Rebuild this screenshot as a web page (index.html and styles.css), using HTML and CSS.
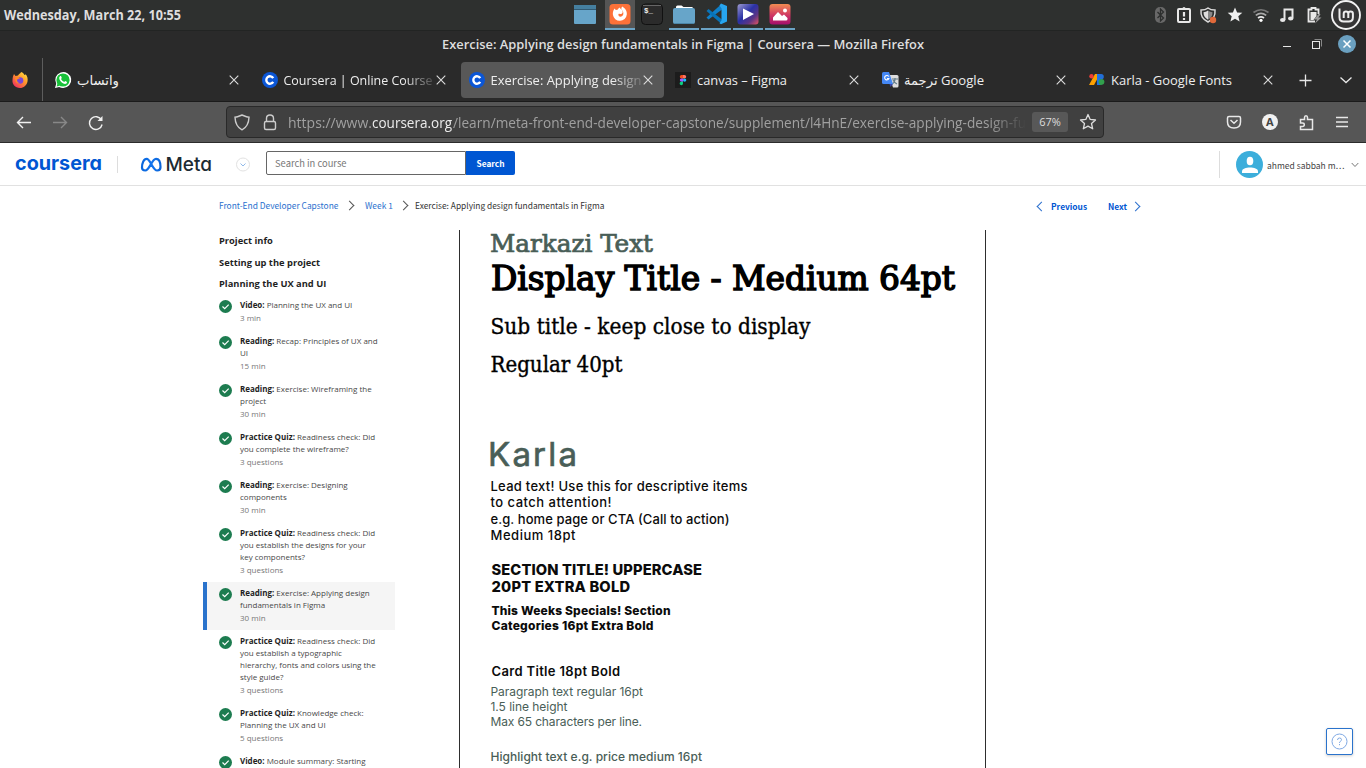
FILE: index.html
```html
<!DOCTYPE html>
<html lang="en">
<head>
<meta charset="utf-8">
<title>Exercise: Applying design fundamentals in Figma | Coursera</title>
<link rel="stylesheet" href="styles.css">
</head>
<body>
<div class="panel">
  <div class="clock"><svg width="190" height="30"><text x="4" y="20.3" textLength="177" lengthAdjust="spacingAndGlyphs">Wednesday, March 22, 10:55</text></svg></div>
  <div class="dock">
    <div class="app desk"><svg width="30" height="30"><rect x="4" y="5" width="22" height="19" rx="1" fill="#67a5c9"/><path d="M4 9V6q0-1 1-1h20q1 0 1 1v3z" fill="#457f9f"/><path d="M4 9.500h22" stroke="#315a73"/></svg></div>
    <div class="app on current"><svg width="30" height="30"><rect x="4.500" y="4" width="21" height="20.500" rx="3.500" fill="#fd7139"/><path d="M9.500 8.500l1.300 1.500 1.700-.3C13.500 8 14.300 8 14.500 7.500c1 1.500 2.500 2 3 3.500q.6 2-.8 2.800-1.500.7-2.700-.3-1.500 1.300 0 2.700c1.500 1 3.800.2 4.300-2 .3-2.200-.5-3.500-2-5.200 0-1 .2-1.800.9-2.500 2.800 1.500 5 4.500 4.600 8a7 7 0 01-13.900.3c-.3-2.500.3-4.500 1.600-6.300z" fill="#fff"/></svg></div>
    <div class="app"><svg width="30" height="30"><rect x="4.500" y="4" width="21" height="20.500" rx="4" fill="#2b2b2b" stroke="#111"/><path d="M6 5.500h18" stroke="#666"/><text x="7" y="12.500" class="term">$_</text></svg></div>
    <div class="app on"><svg width="30" height="30"><path d="M7 7q0-1.500 1.500-1.500h4L14.500 7H23q1 0 1 1.500V12H7z" fill="#fff"/><rect x="4" y="8" width="22" height="16" rx="2" fill="#67a5c9"/><path d="M5 23.500h20" stroke="#4c86a8"/></svg></div>
    <div class="app on"><svg width="30" height="30"><path d="M20.500 4L5.500 17.500l2 2L21 9.500z" fill="#0f7fc8"/><path d="M5.500 11l2-2L21 19.500l-.5 4.500z" fill="#0873b8"/><path d="M20 3.500l6 2.500v15.500l-6 2.800-1.500-1 2-3V8.500l-2-3z" fill="#27a5ef"/></svg></div>
    <div class="app on"><svg width="30" height="30"><defs><linearGradient id="vid" x1="0" y1="0" x2="1" y2="1"><stop offset="0" stop-color="#9d9bd0"/><stop offset=".45" stop-color="#2931a5"/><stop offset=".72" stop-color="#5b3485"/><stop offset="1" stop-color="#e35361"/></linearGradient></defs><rect x="4.500" y="4" width="21" height="20.500" rx="3" fill="url(#vid)"/><path d="M10 8.500l11 5.500-11 6z" fill="#fff"/></svg></div>
    <div class="app on"><svg width="30" height="30"><defs><linearGradient id="pic" x1="0" y1="0" x2="0" y2="1"><stop offset="0" stop-color="#f18b52"/><stop offset=".55" stop-color="#cf3764"/><stop offset="1" stop-color="#a50e6c"/></linearGradient></defs><rect x="4.500" y="4" width="21" height="20.500" rx="3" fill="url(#pic)"/><path d="M8 20.500v-3l5-5.500 4 4 2-1.500 3.500 3.500v1q0 1.500-1.500 1.500z" fill="#fff"/><circle cx="20" cy="10.500" r="2" fill="#fff"/></svg></div>
  </div>
  <svg class="tray" width="226" height="31" viewBox="1140 0 226 31">
    <rect x="1155" y="7" width="11" height="16" rx="5" fill="#686868"/><path d="M1157.500 12l6 6-3 3V9l3 3-6 6" fill="none" stroke="#2c2e2d" stroke-width="1.300"/>
    <rect x="1178" y="9" width="12" height="13" rx="1" fill="none" stroke="#e8e8e8" stroke-width="2"/><circle cx="1184" cy="8.500" r="1.600" fill="#e8e8e8"/><path d="M1184 12v4.500m0 1.500v2" stroke="#e8e8e8" stroke-width="2.200"/>
    <path d="M1208 8c-2.500 2-4.500 2-7 2-.5 6 1.500 9 7 12 5.500-3 7.500-6 7-12-2.500 0-4.500 0-7-2z" fill="none" stroke="#d9d9d9" stroke-width="1.500"/><path d="M1208 10.500c-1.700 1.300-3 1.500-4.500 1.700 0 3.500 1.500 5.700 4.500 7.500z" fill="#ddd"/><path d="M1208 10.500c1.700 1.300 3 1.500 4.500 1.700 0 3.500-1.500 5.700-4.500 7.500z" fill="#888"/><circle cx="1213" cy="20" r="3.200" fill="#e0693a"/>
    <path d="M1235 7.500l2.100 4.900 5.200.4-4 3.500 1.300 5.200-4.600-2.800-4.600 2.800 1.300-5.200-4-3.500 5.200-.4z" fill="#efefef"/>
    <g fill="none" stroke-width="1.700"><path d="M1253.500 12.500q7.500-5.500 15 0" stroke="#777"/><path d="M1255.800 15.300q5.200-4 10.400 0" stroke="#aaa"/><path d="M1258 18q3-2.300 6 0" stroke="#e8e8e8"/></g><circle cx="1261" cy="20.300" r="1.600" fill="#fff"/>
    <path d="M1284.500 20V9.500h8V18" fill="none" stroke="#e8e8e8" stroke-width="2"/><ellipse cx="1282.700" cy="20" rx="2.700" ry="2" fill="#e8e8e8"/><ellipse cx="1290.700" cy="18.500" rx="2.700" ry="2" fill="#e8e8e8"/>
    <path d="M1315 21.500h-6.500V9.500h3V8h4v1.500h3V14" fill="none" stroke="#e8e8e8" stroke-width="1.800"/><path d="M1310.500 12h6v4l-3 4h-3z" fill="#e8e8e8"/><path d="M1319 13.500l-5 6h3l-2 4 6.500-6h-3.200l2.200-3z" fill="#999"/>
    <circle cx="1346" cy="15" r="14" fill="#363636" stroke="#f2f2f2" stroke-width="1.900"/><path d="M1339.500 8.500v8.800q0 4.200 4.200 4.200h5q4.200 0 4.200-4.200v-3.500q0-2.300-2.300-2.300t-2.300 2.300V18m0-4.200q0-2.300-2.300-2.300t-2.300 2.300V18" fill="none" stroke="#eee" stroke-width="2"/>
  </svg>
</div>

<div class="titlebar">
  <svg class="wtitle" width="490" height="27"><text x="4" y="18" textLength="482" lengthAdjust="spacingAndGlyphs">Exercise: Applying design fundamentals in Figma | Coursera — Mozilla Firefox</text></svg>
  <svg class="wctl" width="88" height="27" viewBox="1278 31 88 27"><path d="M1283 46.500h8" stroke="#e6e6e6"/><path d="M1314.500 39.500h7v7" fill="none" stroke="#888"/><rect x="1312.500" y="41.500" width="7" height="7" fill="none" stroke="#e6e6e6"/><circle cx="1347" cy="44" r="9" fill="#6ba0c0"/><path d="M1343.500 40.500l7 7m0-7l-7 7" stroke="#fff" stroke-width="1.500"/></svg>
</div>

<div class="tabs">
  <div class="pinned"><svg width="18" height="18" viewBox="0 0 18 18"><defs><linearGradient id="ff" x1="1" y1="0" x2=".2" y2="1"><stop offset="0" stop-color="#fff14b"/><stop offset=".45" stop-color="#ff9a2a"/><stop offset="1" stop-color="#f02d62"/></linearGradient></defs><path d="M3 3l1.500 2L7 4.500C8.500 2 9.500 3 10 1c2 .5 3 2 3.500 3 1.500-.3 1-1 1-1 2 2 2.500 5 2 7.500-.8 4-4 6.500-7.500 6.500-5 0-8-4-7.500-8C1.700 6.500 2 5 3 3z" fill="url(#ff)"/><circle cx="9" cy="9.500" r="3.300" fill="#7846d7"/><path d="M4 7q3-2 5 .5-3 0-3 2t3 3q-5 .5-5-5.500" fill="#ff8a25"/></svg></div>
  <div class="tab"><svg class="ico" width="16" height="16" viewBox="0 0 16 16"><path d="M0 16l1.200-4.200A8 8 0 118 16q-2 0-3.900-1z" fill="#fff"/><circle cx="8" cy="8" r="6.600" fill="#18c139"/><path d="M1.600 14.500l1-3.500 2.300 2.700z" fill="#18c139"/><path d="M5.200 4q-1.500 1-.8 3.200c1 2.500 3.500 4.500 5.600 4.700q2 0 2.100-2L10.200 9l-1 1.100Q7 9.300 6 7.100L6.800 6 6 4z" fill="#fff"/></svg><svg class="lab" width="155" height="26"><text x="1" y="18" textLength="42" lengthAdjust="spacingAndGlyphs">واتساب</text></svg><svg class="x"><path d="M.7 .7l8.600 8.600m0-8.600L.7 9.300"/></svg></div>
  <div class="tab fade"><svg class="ico" width="16" height="16"><circle cx="8" cy="8" r="8" fill="#0b56d6"/><path d="M11.200 6.100A3.700 3.700 0 1011.200 9.900" fill="none" stroke="#fff" stroke-width="2.400"/></svg><svg class="lab" width="151" height="26"><text x="0.500" y="18" textLength="149" lengthAdjust="spacingAndGlyphs">Coursera | Online Course</text></svg><svg class="x"><path d="M.7 .7l8.600 8.600m0-8.600L.7 9.300"/></svg></div>
  <div class="tab fade active"><svg class="ico" width="16" height="16"><circle cx="8" cy="8" r="8" fill="#0b56d6"/><path d="M11.200 6.100A3.700 3.700 0 1011.200 9.900" fill="none" stroke="#fff" stroke-width="2.400"/></svg><svg class="lab" width="153" height="26"><text x="0.500" y="18" textLength="151" lengthAdjust="spacingAndGlyphs">Exercise: Applying design</text></svg><svg class="x"><path d="M.7 .7l8.600 8.600m0-8.600L.7 9.300"/></svg></div>
  <div class="tab"><svg class="ico" width="16" height="16"><path d="M0 0h16v16H0z" fill="#1c1c1c"/><path d="M8 3H6.500a1.700 1.700 0 000 3.400H8z" fill="#f24e1e"/><path d="M8 3h1.500a1.700 1.700 0 010 3.400H8z" fill="#ff7262"/><path d="M8 6.400H6.500a1.700 1.700 0 000 3.400H8z" fill="#a259ff"/><circle cx="9.600" cy="8.100" r="1.700" fill="#1abcfe"/><path d="M8 9.800H6.500A1.700 1.700 0 108 11.500z" fill="#0acf83"/></svg><svg class="lab" width="155" height="26"><text x="1" y="18" textLength="90" lengthAdjust="spacingAndGlyphs">canvas – Figma</text></svg><svg class="x"><path d="M.7 .7l8.600 8.600m0-8.600L.7 9.300"/></svg></div>
  <div class="tab"><svg class="ico" width="17" height="16"><path d="M7 3h8q1.500 0 1.500 1.500V14q0 1.500-1.500 1.500h-4z" fill="#ddd"/><path d="M10 7h6m-3-1v1c0 3-1 4-3 5m1-4c1 2 2 3 4 4" fill="none" stroke="#667d88" stroke-width="1.200"/><path d="M1.500 0H7l4 12H1.500Q0 12 0 10.500v-9Q0 0 1.500 0z" fill="#4487f4"/><path d="M7.500 12H11l-2.500 3z" fill="#3b45a8"/><path d="M6.800 4.600A2.200 2.200 0 106.900 6.500H5" fill="none" stroke="#fff" stroke-width="1.100"/></svg><svg class="lab" width="155" height="26"><text x="0" y="18" textLength="80" lengthAdjust="spacingAndGlyphs">ترجمة Google</text></svg><svg class="x"><path d="M.7 .7l8.600 8.600m0-8.600L.7 9.300"/></svg></div>
  <div class="tab"><svg class="ico" width="17" height="16"><path d="M6 2h5L5 13H0z" fill="#fba001"/><circle cx="2.500" cy="4.300" r="2.200" fill="#ee3d36"/><path d="M8 2h3v11H8z" fill="#1a73e8"/><path d="M11 2a2.800 2.800 0 010 5.500z" fill="#3185f0"/><path d="M11 7.200a2.900 2.900 0 010 5.800z" fill="#21a35a"/><circle cx="12.500" cy="9.800" r="2.900" fill="#32a04d"/><circle cx="12.200" cy="4.700" r="2.600" fill="#226fd8"/></svg><svg class="lab" width="155" height="26"><text x="0" y="18" textLength="121" lengthAdjust="spacingAndGlyphs">Karla - Google Fonts</text></svg><svg class="x"><path d="M.7 .7l8.600 8.600m0-8.600L.7 9.300"/></svg></div>
  <svg class="tabend" width="80" height="43" viewBox="1284 58 80 43" fill="none" stroke="#e8e8e8" stroke-width="1.300"><path d="M1299.500 80.500h12m-6-6v12M1340.500 77.500l5.500 5 5.500-5"/></svg>
</div>

<div class="nav">
  <svg width="226" height="40" viewBox="0 102 226 40" fill="none" stroke="#f1f1f1" stroke-width="1.400"><path d="M31 122.500H18m5-5.500l-5.500 5.500 5.500 5.500"/><path d="M53 122.500h13m-5-5.500l5.500 5.500-5.500 5.500" stroke="#888"/><path d="M101.500 120a6.400 6.400 0 10.600 4.500"/><path d="M102.500 116v5h-5z" fill="#f1f1f1" stroke="none"/></svg>
  <div class="url">
    <svg width="60" height="30" viewBox="227 107 60 30" fill="none" stroke="#ccc" stroke-width="1.400"><path d="M242 115c-2.500 1-4.500 2-7 2.200.2 6 2 10 7 12.600 5-2.600 6.800-6.600 7-12.600-2.500-.2-4.500-1.200-7-2.200z"/><rect x="264.500" y="121.500" width="11" height="8" rx="1.500"/><path d="M266.500 121.500v-3q0-3.500 3.500-3.500t3.500 3.500v3"/></svg>
    <svg class="addr" width="738" height="30"><text y="21"><tspan x="0" textLength="84" lengthAdjust="spacingAndGlyphs">https://www.</tspan><tspan class="host" x="84" textLength="80" lengthAdjust="spacingAndGlyphs">coursera.org</tspan><tspan x="165" textLength="573" lengthAdjust="spacingAndGlyphs">/learn/meta-front-end-developer-capstone/supplement/l4HnE/exercise-applying-design-fu</tspan></text></svg>
    <span class="zoom">67%</span>
    <svg class="star" width="18" height="18" viewBox="0 0 18 18" fill="none" stroke="#ddd" stroke-width="1.300" stroke-linejoin="round"><path d="M9 1.500l2.200 4.900 5.300.6-4 3.500 1.200 5.300L9 13.100l-4.700 2.700 1.200-5.300-4-3.500 5.300-.6z"/></svg>
  </div>
  <svg width="262" height="40" viewBox="1104 102 262 40" fill="none" stroke="#e8e8e8" stroke-width="1.500"><path d="M1229 116.500h10q1.500 0 1.500 1.500v4q0 6-6.500 6t-6.500-6v-4q0-1.500 1.500-1.500zM1230.500 120l3.500 3.200 3.500-3.200"/><circle cx="1270" cy="122" r="8" fill="#f1f1f1" stroke="none"/><text x="1266" y="126" class="acct">A</text><path d="M1300.500 119.500h4v-2q0-1.800 1.500-1.800t1.500 1.800v2h5V129.500h-12v-3h2q1.800 0 1.800-1.700t-1.800-1.700h-2z"/><path d="M1336 117.500h12m-12 4.500h12m-12 4.500h12" stroke-width="1.300"/></svg>
</div>

<div class="head">
  <svg width="265" height="42" viewBox="0 143 265 42"><text class="cour" x="15" y="170" textLength="87" lengthAdjust="spacingAndGlyphs">coursera</text><path d="M117.500 156v17" stroke="#ddd"/><defs><linearGradient id="mt" x1="0" x2="1"><stop offset="0" stop-color="#0866dc"/><stop offset=".5" stop-color="#1475ee"/><stop offset="1" stop-color="#0b65d8"/></linearGradient></defs><path d="M142 167.500c0-4.500 1.800-8.700 4.700-8.700 3.700 0 5.900 11.700 10.500 11.700 2.300 0 3.300-1.500 3.300-3.500 0-4.500-1.500-8.200-4.500-8.200-4.300 0-6.400 11.700-10.700 11.700-2 0-3.300-1-3.300-3z" fill="none" stroke="url(#mt)" stroke-width="2.200"/><text class="meta" x="165.500" y="171" textLength="46.500" lengthAdjust="spacingAndGlyphs">Meta</text><circle cx="243" cy="164.500" r="6.500" fill="none" stroke="#e2e2e2"/><path d="M240.500 163.500l2.500 2.500 2.500-2.500" fill="none" stroke="#8fb9ea"/></svg>
  <div class="search"><span class="field">Search in course</span><span class="go">Search</span></div>
  <div class="user"><svg width="27" height="27"><circle cx="13.500" cy="13.500" r="13.500" fill="#3caedb"/><ellipse cx="14" cy="10" rx="3.300" ry="4.300" fill="#fff"/><path d="M6 22v-1.500c0-3 4-4 8-4s8 1 8 4V22z" fill="#fff"/></svg><span>ahmed sabbah m…</span><svg width="8" height="6"><path d="M.7 1L4 4.500 7.300 1" fill="none" stroke="#777"/></svg></div>
</div>

<div class="crumbs">
  <a class="c1">Front-End Developer Capstone</a><i class="chev"></i><a class="c2">Week 1</a><i class="chev"></i><span class="c3">Exercise: Applying design fundamentals in Figma</span>
  <div class="pager"><i class="chev back"></i><b>Previous</b><b class="nx">Next</b><i class="chev fwd"></i></div>
</div>

<div class="main">
  <div class="side">
    <h3>Project info</h3><h3>Setting up the project</h3><h3>Planning the UX and UI</h3>
    <div class="item"><svg class="ok" viewBox="0 0 13 13"><circle cx="6.500" cy="6.500" r="6.500"/><path d="M3.500 6.500l2.200 2.200 4-4"/></svg><p><b>Video:</b> Planning the UX and UI<small>3 min</small></p></div>
    <div class="item"><svg class="ok" viewBox="0 0 13 13"><circle cx="6.500" cy="6.500" r="6.500"/><path d="M3.500 6.500l2.200 2.200 4-4"/></svg><p><b>Reading:</b> Recap: Principles of UX and<br>UI<small>15 min</small></p></div>
    <div class="item"><svg class="ok" viewBox="0 0 13 13"><circle cx="6.500" cy="6.500" r="6.500"/><path d="M3.500 6.500l2.200 2.200 4-4"/></svg><p><b>Reading:</b> Exercise: Wireframing the<br>project<small>30 min</small></p></div>
    <div class="item"><svg class="ok" viewBox="0 0 13 13"><circle cx="6.500" cy="6.500" r="6.500"/><path d="M3.500 6.500l2.200 2.200 4-4"/></svg><p><b class="quiz">Practice Quiz:</b> Readiness check: Did<br>you complete the wireframe?<small>3 questions</small></p></div>
    <div class="item"><svg class="ok" viewBox="0 0 13 13"><circle cx="6.500" cy="6.500" r="6.500"/><path d="M3.500 6.500l2.200 2.200 4-4"/></svg><p><b>Reading:</b> Exercise: Designing<br>components<small>30 min</small></p></div>
    <div class="item"><svg class="ok" viewBox="0 0 13 13"><circle cx="6.500" cy="6.500" r="6.500"/><path d="M3.500 6.500l2.200 2.200 4-4"/></svg><p><b class="quiz">Practice Quiz:</b> Readiness check: Did<br>you establish the designs for your<br>key components?<small>3 questions</small></p></div>
    <div class="item sel"><svg class="ok" viewBox="0 0 13 13"><circle cx="6.500" cy="6.500" r="6.500"/><path d="M3.500 6.500l2.200 2.200 4-4"/></svg><p><b>Reading:</b> Exercise: Applying design<br>fundamentals in Figma<small>30 min</small></p></div>
    <div class="item"><svg class="ok" viewBox="0 0 13 13"><circle cx="6.500" cy="6.500" r="6.500"/><path d="M3.500 6.500l2.200 2.200 4-4"/></svg><p><b class="quiz">Practice Quiz:</b> Readiness check: Did<br>you establish a typographic<br>hierarchy, fonts and colors using the<br>style guide?<small>3 questions</small></p></div>
    <div class="item"><svg class="ok" viewBox="0 0 13 13"><circle cx="6.500" cy="6.500" r="6.500"/><path d="M3.500 6.500l2.200 2.200 4-4"/></svg><p><b class="quiz">Practice Quiz:</b> Knowledge check:<br>Planning the UX and UI<small>5 questions</small></p></div>
    <div class="item"><svg class="ok" viewBox="0 0 13 13"><circle cx="6.500" cy="6.500" r="6.500"/><path d="M3.500 6.500l2.200 2.200 4-4"/></svg><p><b>Video:</b> Module summary: Starting</p></div>
  </div>
  <div class="sheet">
    <svg width="525" height="538" viewBox="460 230 525 538">
      <g class="serif">
        <text class="green mk" x="490" y="252" textLength="163" lengthAdjust="spacingAndGlyphs">Markazi Text</text>
        <text class="disp" x="491" y="289.500" textLength="464" lengthAdjust="spacingAndGlyphs">Display Title - Medium 64pt</text>
        <text class="sub" x="490.500" y="334" textLength="320" lengthAdjust="spacingAndGlyphs">Sub title - keep close to display</text>
        <text class="sub" x="490.500" y="371.500" textLength="132" lengthAdjust="spacingAndGlyphs">Regular 40pt</text>
      </g>
      <g class="sans">
        <text class="green karla" x="488" y="465.500" textLength="89" lengthAdjust="spacing">Karla</text>
        <g class="lead"><text x="490.500" y="491" textLength="257" lengthAdjust="spacing">Lead text! Use this for descriptive items</text><text x="490.500" y="507.300" textLength="121" lengthAdjust="spacing">to catch attention!</text><text x="490.500" y="523.500" textLength="239" lengthAdjust="spacing">e.g. home page or CTA (Call to action)</text><text x="490.500" y="539.700" textLength="85" lengthAdjust="spacing">Medium 18pt</text></g>
        <g class="sect"><text x="491.500" y="574.500" textLength="210.500" lengthAdjust="spacing">SECTION TITLE! UPPERCASE</text><text x="491.500" y="592.300" textLength="138.500" lengthAdjust="spacing">20PT EXTRA BOLD</text></g>
        <g class="week"><text x="491.500" y="614.800" textLength="179" lengthAdjust="spacing">This Weeks Specials! Section</text><text x="491.500" y="629.700" textLength="162" lengthAdjust="spacing">Categories 16pt Extra Bold</text></g>
        <text class="card" x="491.500" y="676" textLength="128.500" lengthAdjust="spacing">Card Title 18pt Bold</text>
        <g class="green para"><text x="490.500" y="696.300" textLength="152.500" lengthAdjust="spacing">Paragraph text regular 16pt</text><text x="490.500" y="711.200" textLength="77" lengthAdjust="spacing">1.5 line height</text><text x="490.500" y="725.900" textLength="151.500" lengthAdjust="spacing">Max 65 characters per line.</text><text class="hl" x="490.500" y="760.500" textLength="211.500" lengthAdjust="spacing">Highlight text e.g. price medium 16pt</text></g>
      </g>
    </svg>
  </div>
</div>
<div class="help"><svg width="17" height="17"><circle cx="8.500" cy="8.500" r="7.500" fill="none" stroke="#7fa9e4"/><path d="M6.500 7q0-2 2-2t2 1.700q0 1-1.200 1.700-.8.500-.8 1.600m0 1v1.200" fill="none" stroke="#7fa9e4"/></svg></div>
</body>
</html>
```
FILE: styles.css
```css
* { box-sizing: border-box; }
body { margin: 0; width: 1366px; height: 768px; overflow: hidden; background: #fff; font-family: "Open Sans", "Noto Sans", sans-serif; display: flex; flex-direction: column; }
svg { display: block; flex: none; overflow: visible; }
.panel, .titlebar, .tabs, .nav, .head, .crumbs { flex: none; display: flex; }

.panel { height: 31px; background: #2e302f; border-bottom: 1px solid #222423; justify-content: space-between; }
.clock { width: 570px; font-weight: 700; font-size: 13.5px; }
.clock text { fill: #dedede; }
.dock { display: flex; gap: 2px; flex: 1; }
.app { width: 30px; height: 30px; }
.app.desk { margin-right: 3px; }
.app.on { background: linear-gradient(#6ba3c5, #6ba3c5) bottom / 100% 2px no-repeat; }
.app.current { background-color: #555; }
.term { font: bold 7.500px "Liberation Mono", monospace; fill: #eee; }

.titlebar { height: 27px; background: #2a2a2a; padding-left: 438px; justify-content: space-between; }
.wtitle text { font-size: 13.2px; font-weight: 600; fill: #dedede; }

.tabs { height: 44px; background: #2a2a2a; border-bottom: 1px solid #1b1b1b; }
.pinned { width: 43px; border-right: 1px solid #5d5d5d; padding: 13px 0 0 11px; }
.tab { width: 206.8px; height: 36px; margin-top: 4px; padding: 0 10px 0 12px; display: flex; align-items: center; position: relative; flex: none; }
.tab .lab { margin-left: 5px; }
.tab .lab text { font-size: 13.3px; fill: #eee; font-family: "Open Sans", "DejaVu Sans", sans-serif; }
.tab.active::before { content: ""; position: absolute; left: 4px; right: -1px; top: 0; bottom: 0; background: #585858; border-radius: 4px; }
.tab.active .ico, .tab.active .lab { position: relative; }
.tab.fade .lab { -webkit-mask-image: linear-gradient(90deg, #000 80%, #0002); mask-image: linear-gradient(90deg, #000 80%, #0002); }
.x { position: absolute; left: 186px; top: 13px; width: 10px; height: 10px; stroke: #ddd; stroke-width: 1.1; }

.nav { height: 41px; background: #565656; border-bottom: 1px solid #2b2b2b; }
.url { width: 878px; height: 32px; margin-top: 4px; background: #404040; border: 1px solid #292929; border-radius: 4px; display: flex; align-items: center; }
.addr { -webkit-mask-image: linear-gradient(90deg, #000 95%, transparent); mask-image: linear-gradient(90deg, #000 95%, transparent); margin-left: 1px; }
.addr text { font-size: 14.3px; fill: #a0a0a0; }
.addr .host { fill: #ececec; }
.zoom { width: 36px; height: 20px; margin-left: 6px; border-radius: 3px; background: #585858; color: #ddd; font-size: 11px; line-height: 20px; text-align: center; }
.star { margin-left: 11px; }
.acct { font: bold 11px "Open Sans", sans-serif; fill: #444; stroke: none; }

.head { height: 43px; border-bottom: 1px solid #e1e1e1; font-family: "Noto Sans CJK SC", sans-serif; }
.cour { font: 700 20px Inter, sans-serif; font-feature-settings: "cv11"; fill: #0056d2; }
.meta { font: 500 18.500px Inter, sans-serif; font-feature-settings: "cv11"; fill: #1c2b33; }
.search { display: flex; width: 249px; height: 24px; margin: 8px 0 0 1px; line-height: 22px; }
.field { width: 200px; border: 1px solid #666; border-radius: 2px 0 0 2px; padding-left: 8px; color: #777; font-size: 9.400px; }
.go { flex: 1; background: #0056d2; color: #fff; font-weight: 700; font-size: 8.300px; text-align: center; border-radius: 0 2px 2px 0; line-height: 24px; }
.user { margin: 8px 7px 0 auto; height: 27px; padding-left: 16px; border-left: 1px solid #ddd; display: flex; align-items: center; font-size: 8.500px; color: #444; }
.user span { width: 77px; margin: 0 7px 0 4px; white-space: nowrap; }

.crumbs { height: 44px; padding: 12px 0 0 219px; font: 8.400px/14px "Noto Sans CJK SC", sans-serif; color: #333; white-space: nowrap; }
.crumbs a { color: #2a6fce; }
.c1 { width: 128px; }
.c2 { width: 36px; margin-left: 2px; }
.c3 { width: 622px; margin-left: -2px; }
.chev { width: 7px; height: 7px; flex: none; border: solid #555; border-width: 1px 1px 0 0; transform: rotate(45deg); margin: 4px 10px 0 -1px; }
.pager { display: flex; color: #0056d2; line-height: 16px; }
.pager b { width: 57px; }
.pager .nx { width: 24px; }
.pager .chev { border-color: #2a6fce; margin: 5px 6px 0 1px; }
.pager .back { transform: rotate(-135deg); }
.pager .fwd { margin: 5px 0 0; }

.main { display: flex; height: 538px; overflow: hidden; }
.side { width: 256px; margin-left: 203px; flex: none; }
.side h3 { margin: 0; padding-left: 16px; font-size: 9.330px; line-height: 21.500px; font-weight: 700; color: #1f1f1f; white-space: nowrap; }
.side h3:nth-child(2) { line-height: 21px; }
.item { width: 192px; padding: 5px 0 6px 16px; display: flex; }
.side h3 + .item { margin-top: -.5px; }
.item.sel { background: #f5f5f5; border-left: 4px solid #2a73cc; padding-left: 12px; }
.ok { width: 13px; height: 13px; margin: 1px 8px 0 0; fill: #1d7c50; }
.ok path { fill: none; stroke: #fff; stroke-width: 1.200; }
.item p { margin: 0; font-size: 8px; line-height: 12px; color: #484848; white-space: nowrap; }
.item b { color: #1f1f1f; letter-spacing: -.02px; }
.item .quiz { letter-spacing: .02px; }
.item small { display: block; font-size: 8px; line-height: 12px; padding-top: 1px; color: #777; }
.sheet { width: 527px; border: solid #2e2e2e; border-width: 0 1px; flex: none; }
.serif { font-family: "DejaVu Serif Condensed", "DejaVu Serif", serif; fill: #000; }
.sans { font-family: Inter, sans-serif; fill: #0b0b0b; }
.green { fill: #495e57; }
.mk { font-size: 24.500px; stroke: #495e57; stroke-width: .7px; }
.disp { font-size: 33.500px; stroke: #000; stroke-width: 1.400px; }
.sub { font-size: 21.500px; stroke: #000; stroke-width: .35px; }
.karla { font-size: 33px; font-weight: 400; stroke: #495e57; stroke-width: .7px; }
.lead { font-size: 13px; font-weight: 500; }
.sect { font-size: 14.700px; font-weight: 800; }
.week { font-size: 12px; font-weight: 800; }
.card { font-size: 13px; font-weight: 600; }
.para { font-size: 12px; }
.hl { font-weight: 500; }
.help { position: absolute; left: 1326px; top: 728px; width: 27px; height: 27px; border: 1px solid #2a73cc; border-radius: 2px; background: #fff; box-shadow: 0 1px 3px #0003; padding: 4px; }
```
